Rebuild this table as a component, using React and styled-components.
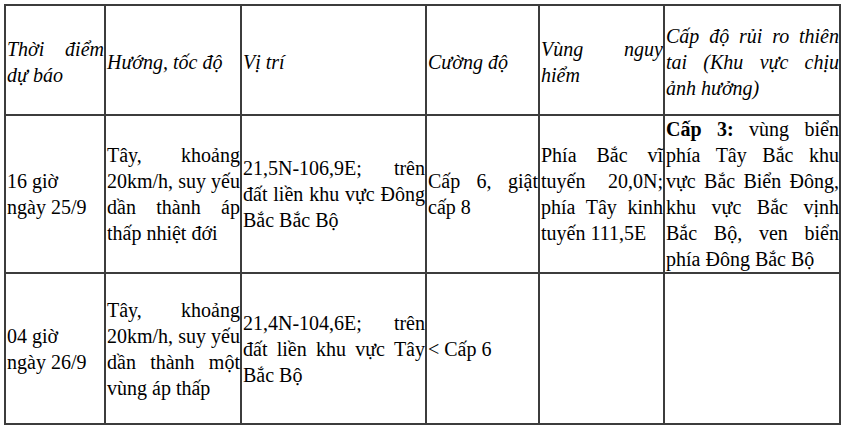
import React from "react";
import styled, { createGlobalStyle } from "styled-components";

const Global = createGlobalStyle`
  html, body { margin: 0; padding: 0; background: #ffffff; }
  body { padding: 4px 0 0 4px; }
`;

const Table = styled.table`
  border-collapse: collapse;
  table-layout: fixed;
  width: 837px;
  font-family: "Liberation Serif", "Times New Roman", serif;
  font-size: 20px;
  line-height: 26px;
  color: #000;
`;

const Row = styled.tr`
  height: ${(p) => p.$h}px;
`;

const Cell = styled.td`
  border: 2px solid #3c3c3c;
  padding: ${(p) => (p.$head ? "3px" : "0")} 0 0 1px;
  vertical-align: middle;
  text-align: justify;
  font-style: ${(p) => (p.$head ? "italic" : "normal")};
  overflow: visible;
`;

const Strong = styled.b`
  font-weight: bold;
`;

const widths = [100, 136, 185, 113, 125, 176];

const header = [
  "Thời điểm dự báo",
  "Hướng, tốc độ",
  "Vị trí",
  "Cường độ",
  "Vùng nguy hiểm",
  "Cấp độ rủi ro thiên tai (Khu vực chịu ảnh hưởng)",
];

const rows = [
  {
    h: 158,
    cells: [
      <>
        16 giờ
        <br />
        ngày 25/9
      </>,
      "Tây, khoảng 20km/h, suy yếu dần thành áp thấp nhiệt đới",
      "21,5N-106,9E; trên đất liền khu vực Đông Bắc Bắc Bộ",
      "Cấp 6, giật cấp 8",
      "Phía Bắc vĩ tuyến 20,0N; phía Tây kinh tuyến 111,5E",
      <>
        <Strong>Cấp 3:</Strong> vùng biển phía Tây Bắc khu vực Bắc Biển Đông,
        khu vực Bắc vịnh Bắc Bộ, ven biển phía Đông Bắc Bộ
      </>,
    ],
  },
  {
    h: 151,
    cells: [
      <>
        04 giờ
        <br />
        ngày 26/9
      </>,
      "Tây, khoảng 20km/h, suy yếu dần thành một vùng áp thấp",
      "21,4N-104,6E; trên đất liền khu vực Tây Bắc Bộ",
      "< Cấp 6",
      "",
      "",
    ],
  },
];

export default function App() {
  return (
    <>
      <Global />
      <Table>
        <colgroup>
          {widths.map((w, i) => (
            <col key={i} style={{ width: w }} />
          ))}
        </colgroup>
        <tbody>
          <Row $h={110}>
            {header.map((t, i) => (
              <Cell key={i} $head>
                {t}
              </Cell>
            ))}
          </Row>
          {rows.map((r, ri) => (
            <Row key={ri} $h={r.h}>
              {r.cells.map((c, ci) => (
                <Cell key={ci}>{c}</Cell>
              ))}
            </Row>
          ))}
        </tbody>
      </Table>
    </>
  );
}
